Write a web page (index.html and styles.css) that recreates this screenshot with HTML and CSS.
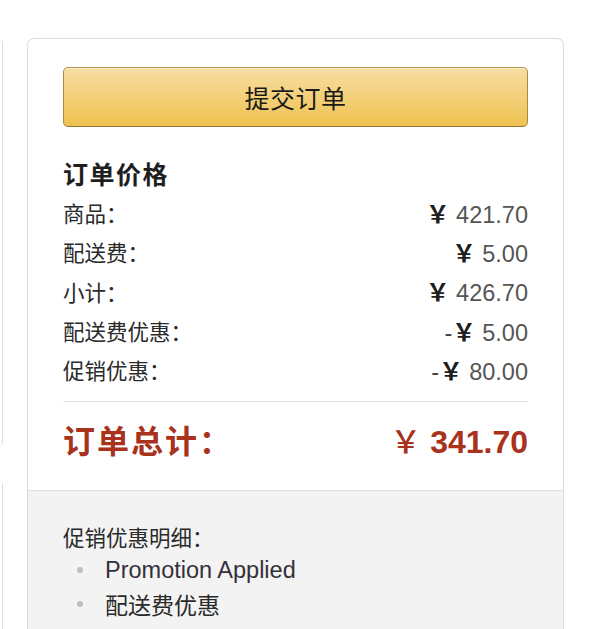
FILE: index.html
```html
<!DOCTYPE html>
<html lang="zh-CN">
<head>
<meta charset="utf-8">
<title>订单价格</title>
<link rel="stylesheet" href="styles.css">
</head>
<body>
<div class="page">
  <div class="side">
    <div class="side-card side-card-top"></div>
    <div class="side-card side-card-bottom"></div>
  </div>
  <section class="summary">
    <div class="summary-main">
      <button class="place-order" type="button">提交订单</button>
      <h3 class="summary-title">订单价格</h3>
      <div class="lines">
        <div class="line"><span class="label">商品：</span><span class="amount"><span class="yen">￥</span> 421.70</span></div>
        <div class="line"><span class="label">配送费：</span><span class="amount"><span class="yen">￥</span> 5.00</span></div>
        <div class="line"><span class="label">小计：</span><span class="amount"><span class="yen">￥</span> 426.70</span></div>
        <div class="line"><span class="label">配送费优惠：</span><span class="amount"><span class="minus">-</span><span class="yen">￥</span> 5.00</span></div>
        <div class="line"><span class="label">促销优惠：</span><span class="amount"><span class="minus">-</span><span class="yen">￥</span> 80.00</span></div>
      </div>
      <div class="total">
        <span class="total-label">订单总计：</span>
        <span class="total-amount"><span class="yen">￥</span> 341.70</span>
      </div>
    </div>
    <div class="summary-promo">
      <p class="promo-title">促销优惠明细：</p>
      <ul class="promo-list">
        <li class="promo-item promo-en">Promotion Applied</li>
        <li class="promo-item">配送费优惠</li>
      </ul>
    </div>
  </section>
</div>
</body>
</html>
```

FILE: styles.css
```css
html, body {
  margin: 0;
  padding: 0;
  background: #ffffff;
}

body {
  font-family: "Noto Sans CJK SC", "Liberation Sans", sans-serif;
  color: #222;
  overflow: hidden;
}

.page {
  display: flex;
  align-items: flex-start;
  height: 629px;
}

/* edge of the neighbouring column */
.side {
  width: 3px;
  height: 629px;
  display: flex;
  flex-direction: column;
  gap: 38px;
  padding-top: 40px;
  box-sizing: border-box;
}

.side-card {
  border-right: 1px solid #dedede;
  width: 2px;
}

.side-card-top {
  height: 405px;
  border-radius: 0 4px 4px 0;
}

.side-card-bottom {
  flex: 1;
}

.summary {
  margin-left: 24px;
  margin-top: 38px;
  width: 537px;
  height: 600px;
  box-sizing: border-box;
  border: 1px solid #dcdcdc;
  border-bottom: none;
  border-radius: 7px 7px 0 0;
  display: flex;
  flex-direction: column;
}

.summary-main {
  padding: 28px 35px 26px;
}

.place-order {
  display: block;
  width: 100%;
  height: 60px;
  margin: 0;
  padding: 0;
  border: 1px solid;
  border-color: #b89a4c #a98b3c #8f7430;
  border-radius: 5px;
  background: linear-gradient(to bottom, #f7dea3, #efc24f);
  box-shadow: inset 0 1px 0 rgba(255, 255, 255, 0.45);
  font-family: "Noto Sans CJK SC", sans-serif;
  font-size: 25px;
  color: #1a1a1a;
  letter-spacing: 0.5px;
  cursor: pointer;
}

.summary-title {
  margin: 31px 0 5px;
  font-size: 25px;
  line-height: 30px;
  font-weight: bold;
  color: #1e1e1e;
  letter-spacing: 1.5px;
}

.lines {
  padding-bottom: 12px;
  border-bottom: 1px solid #e2e2e2;
}

.line {
  display: flex;
  justify-content: space-between;
  align-items: center;
  height: 39.3px;
}

.label {
  font-size: 21.5px;
  color: #2a2a2a;
}

.amount {
  font-family: "Liberation Sans", Arial, sans-serif;
  font-size: 23.5px;
  color: #555;
}

.minus {
  color: #444;
}

.yen {
  font-family: "Noto Sans CJK SC", sans-serif;
  color: #1e1e1e;
  font-weight: bold;
}

.total {
  display: flex;
  justify-content: space-between;
  align-items: center;
  height: 50px;
  margin-top: 12px;
  color: #a8321b;
}

.total-label {
  font-size: 32px;
  font-weight: bold;
  letter-spacing: 2px;
}

.total-amount {
  font-family: "Liberation Sans", Arial, sans-serif;
  font-size: 32px;
  font-weight: bold;
}

.total-amount .yen {
  color: #a8321b;
  font-weight: 500;
  font-size: 31px;
}

.summary-promo {
  flex: 1;
  border-top: 1px solid #dedede;
  background: #f3f3f3;
  padding: 30px 35px 0 35px;
}

.promo-title {
  margin: 0;
  font-size: 21.5px;
  line-height: 32px;
  color: #2a2a2a;
}

.promo-list {
  list-style: none;
  margin: 0;
  padding: 0;
}

.promo-item {
  display: flex;
  align-items: center;
  height: 34px;
  font-size: 23px;
  color: #2a2a2a;
}

.promo-item::before {
  content: "";
  width: 6px;
  height: 6px;
  border-radius: 50%;
  background: #bdbdbd;
  margin-left: 14px;
  margin-right: 22px;
  flex: none;
}

.promo-en {
  font-family: "Liberation Sans", Arial, sans-serif;
  font-size: 23.5px;
  color: #35303a;
}
```
